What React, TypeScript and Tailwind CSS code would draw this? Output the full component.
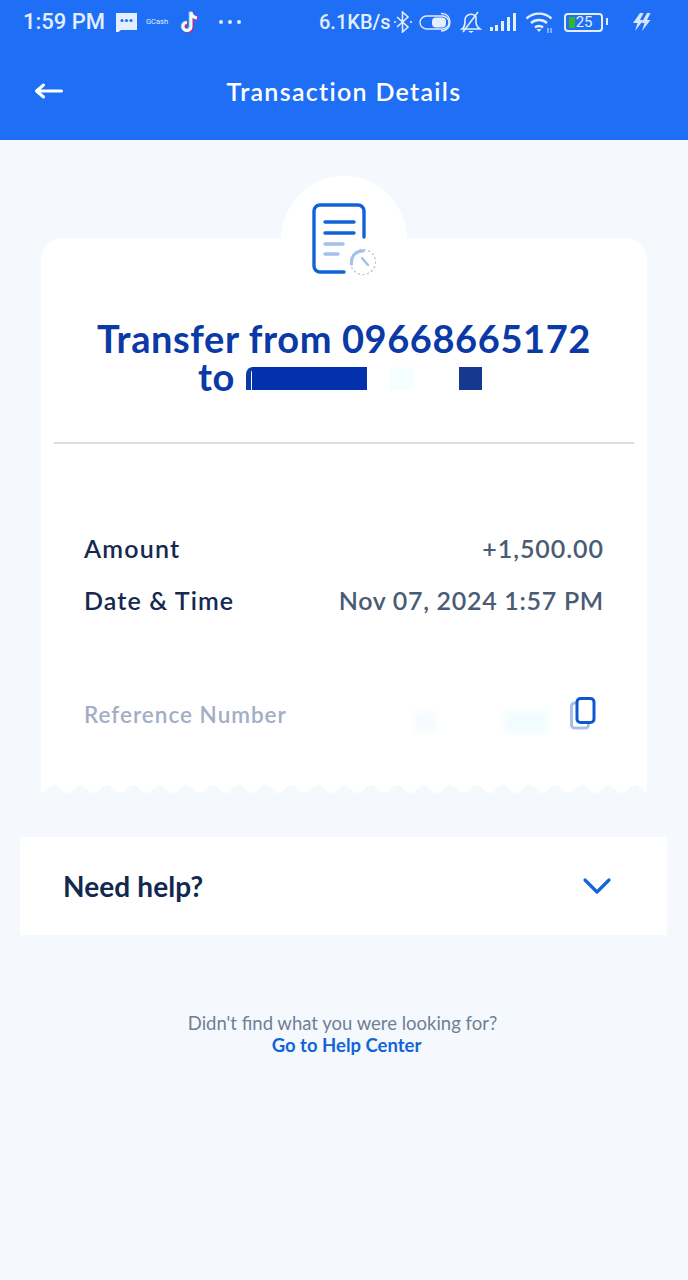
import React from "react";

const Wave = () => {
  let d = "M0 10 L0 9 ";
  for (let i = 0; i < 23; i++) {
    const x = i * 26.4;
    d += `C${x + 5} 9 ${x + 8} 1 ${x + 13.2} 1 C${x + 18} 1 ${x + 21} 9 ${x + 26.4} 9 `;
  }
  d += "L606 10 Z";
  return (
    <svg className="absolute left-0 bottom-0" width="606" height="10" viewBox="0 0 606 10">
      <path d={d} fill="#f5f9fe" />
    </svg>
  );
};

const StatusBar = () => (
  <div className="h-[44px] flex items-center pl-[23px] text-[#e3eefe] font-['Roboto',sans-serif]">
    <span className="text-[22px] font-medium leading-none w-[92px] whitespace-nowrap">1:59 PM</span>
    <svg width="22" height="20" viewBox="0 0 22 20">
      <path d="M1 1h21v17H6l-5 4z" fill="#e3eefe" />
      <circle cx="7" cy="8.5" r="1.6" fill="#1e6ff5" />
      <circle cx="11.5" cy="8.5" r="1.6" fill="#1e6ff5" />
      <circle cx="16" cy="8.5" r="1.6" fill="#1e6ff5" />
    </svg>
    <span className="text-[7.5px] ml-[9px] w-[23px] leading-none">GCash</span>
    <svg width="22" height="24" viewBox="0 0 22 24" className="ml-[10px]">
      <path d="M12 2v14.5a4 4 0 1 1-4-4M12 2c.5 3.5 2.5 5.5 6 6" fill="none" stroke="#ee1d52" strokeWidth="3.2" transform="translate(.8 .8)" />
      <path d="M12 2v14.5a4 4 0 1 1-4-4M12 2c.5 3.5 2.5 5.5 6 6" fill="none" stroke="#69c9d0" strokeWidth="3.2" transform="translate(-.8 -.4)" />
      <path d="M12 2v14.5a4 4 0 1 1-4-4M12 2c.5 3.5 2.5 5.5 6 6" fill="none" stroke="#f4f8ff" strokeWidth="3" />
    </svg>
    <svg width="24" height="6" viewBox="0 0 24 6" className="ml-[17px]">
      <circle cx="3" cy="3" r="2" fill="#e3eefe" />
      <circle cx="12" cy="3" r="2" fill="#e3eefe" />
      <circle cx="21" cy="3" r="2" fill="#e3eefe" />
    </svg>
    <span className="text-[20px] font-medium leading-none ml-[77px] whitespace-nowrap">6.1KB/s</span>
    <svg width="20" height="22" viewBox="0 0 20 22" className="ml-[2px]" fill="none" stroke="#e3eefe" strokeWidth="1.6">
      <path d="M4 6l11 10-5.5 5V1L15 6 4 16" />
      <circle cx="2" cy="11" r="1" fill="#e3eefe" stroke="none" />
      <circle cx="18" cy="11" r="1" fill="#e3eefe" stroke="none" />
    </svg>
    <svg width="34" height="22" viewBox="0 0 34 22" className="ml-[6px]" fill="none" stroke="#e3eefe" strokeWidth="1.4">
      <rect x="1" y="5" width="29" height="13" rx="6.5" />
      <rect x="13" y="6.5" width="14" height="10" rx="4" fill="#e3eefe" stroke="none" />
      <path d="M22 2.5c12-1 12 18 0 17.5" />
    </svg>
    <svg width="22" height="24" viewBox="0 0 22 24" className="ml-[7px]" fill="none" stroke="#e3eefe" strokeWidth="1.6">
      <path d="M2 19c3-2 3-5 3-9a6 6 0 0 1 11-3v5c0 3 1 5 4 7z" />
      <path d="M3 22L18 2" />
      <path d="M8 21h6l-3 2z" fill="#e3eefe" stroke="none" />
    </svg>
    <svg width="26" height="20" viewBox="0 0 26 20" className="ml-[8px]" fill="#e3eefe">
      <rect x="0" y="15" width="3" height="4" />
      <rect x="5" y="13" width="3" height="6" />
      <rect x="11" y="9" width="3" height="10" />
      <rect x="17" y="5" width="3" height="14" />
      <rect x="23" y="1" width="3" height="18" />
    </svg>
    <svg width="28" height="24" viewBox="0 0 28 24" className="ml-[9px]" fill="none" stroke="#e3eefe" strokeWidth="2.4">
      <path d="M1.5 8.5c7-6.5 18-6.5 25 0" />
      <path d="M6 13c4.500-4 11.500-4 16 0" />
      <path d="M10 17.500c2.200-2 5.800-2 8 0" />
      <path d="M11.500 19h5l-2.500 3z" fill="#e3eefe" stroke="none" />
      <path d="M23 18v5M26 18v5" strokeWidth="1" />
    </svg>
    <div className="ml-[11px] w-[39px] h-[19px] border-2 border-[#e3eefe] rounded-[4px] flex items-center pl-[3px] relative">
      <span className="w-[6px] h-[11px] bg-[#34b52a] shrink-0" />
      <span className="text-[15px] leading-none ml-[1px]">25</span>
      <span className="absolute -right-[7px] top-[3px] w-[2px] h-[7px] bg-[#e3eefe]" />
    </div>
    <svg width="20" height="20" viewBox="0 0 20 20" className="ml-[29px]" fill="#d6e5fd">
      <path d="M8 1h3.500L8 8h3.500L3 19l2.500-8H1z" />
      <path d="M15 1h3.500L15 8h3.500L10 19l2.500-8H9.500z" />
    </svg>
  </div>
);

const DocIcon = () => (
  <svg width="66" height="74" viewBox="0 0 66 74" fill="none" strokeLinecap="round">
    <path d="M53 35V9a6 6 0 0 0-6-6H9a6 6 0 0 0-6 6v55a6 6 0 0 0 6 6h24" stroke="#1164d8" strokeWidth="3.4" />
    <path d="M14 20h29M14 31h29" stroke="#1164d8" strokeWidth="3.4" />
    <path d="M14 42h18M14 52h13" stroke="#a5c0ec" strokeWidth="3.4" />
    <circle cx="52" cy="60" r="12.500" stroke="#b5bcc8" strokeWidth="1.200" strokeDasharray="1.200 3.400" />
    <path d="M40.500 62c-1-8 5-13.500 12-13" stroke="#a5c0ec" strokeWidth="3" />
    <path d="M51 56l6 7" stroke="#a5c0ec" strokeWidth="2.400" />
  </svg>
);

export default function App() {
  return (
    <div className="w-[688px] h-[1280px] bg-[#f5f9fe] font-['Lato',sans-serif] overflow-hidden">
      <div className="h-[140px] bg-[#1e6ff5]">
        <StatusBar />
        <div className="h-[96px] relative flex items-center justify-center pb-[2px]">
          <svg width="30" height="18" viewBox="0 0 30 18" className="absolute left-[34px] top-[38px]" fill="none" stroke="#ffffff" strokeWidth="3" strokeLinecap="round" strokeLinejoin="round">
            <path d="M27.500 9H3M9.500 3L2.500 9l7 6" />
          </svg>
          <span className="text-[25px] text-white font-semibold tracking-[1.3px] leading-none">Transaction Details</span>
        </div>
      </div>

      <div className="mt-[98px] ml-[41px] w-[606px] h-[556px] bg-white rounded-t-[22px] relative">
        <div className="absolute left-[240px] -top-[62px] w-[126px] h-[126px] rounded-full bg-white" />
        <div className="absolute left-[270px] -top-[36px]">
          <DocIcon />
        </div>
        <div className="relative pt-[81px] text-center text-[38px] leading-[38px] font-bold text-[#0b3aa6] tracking-[0.6px]">
          <div>Transfer from 09668665172</div>
          <div className="flex items-center h-[38px] pl-[157px]">
            <span>to</span>
            <span className="w-[7px] h-[23px] ml-[11px] mt-[4px] rounded-tl-[10px] border-l-[5px] border-t-[3px] border-[#0b3aa6]" />
            <span className="w-[115px] h-[23px] bg-[#0331ad] mt-[4px] -ml-[1px]" />
            <span className="w-[23px] h-[23px] bg-[#f6ffff] mt-[4px] ml-[23px]" />
            <span className="w-[23px] h-[23px] bg-[#17388f] mt-[4px] ml-[46px]" />
          </div>
        </div>
        <div className="mt-[47px] mx-[13px] h-[2px] bg-[#d5dfe6]" />
        <div className="mt-[89px] px-[43px] flex flex-col gap-[22px]">
          <div className="flex justify-between items-center h-[30px] text-[25px] font-semibold leading-none">
            <span className="text-[#15294f] tracking-[1.2px]">Amount</span>
            <span className="text-[#485c74] tracking-[0.95px]">+1,500.00</span>
          </div>
          <div className="flex justify-between items-center h-[30px] text-[25px] font-semibold leading-none">
            <span className="text-[#15294f] tracking-[1.1px]">Date &amp; Time</span>
            <span className="text-[#485c74] tracking-[0.7px]">Nov 07, 2024 1:57 PM</span>
          </div>
        </div>
        <div className="mt-[79px] pl-[43px] flex items-center h-[40px] relative">
          <span className="text-[22.5px] tracking-[1px] font-semibold text-[#a3aec4] leading-none w-[330px] whitespace-nowrap mt-[2px]">Reference Number</span>
          <span className="w-[22px] h-[20px] bg-[#f5fbfe] blur-[3px] mt-[16px]" />
          <span className="w-[44px] h-[22px] bg-[#f2fcfe] ml-[68px] blur-[3px] mt-[16px]" />
          <svg width="26" height="34" viewBox="0 0 26 34" className="ml-[22px]" fill="none">
            <rect x="1.500" y="6" width="17" height="25" rx="3" stroke="#a5c0ec" strokeWidth="3" />
            <rect x="7" y="1.500" width="17" height="24" rx="3.500" fill="#ffffff" stroke="#1058cf" strokeWidth="3" />
          </svg>
        </div>
        <Wave />
      </div>

      <div className="mt-[43px] ml-[20px] mr-[21px] h-[98px] bg-white flex items-center justify-between pl-[43px] pr-[55px]">
        <span className="text-[28px] font-bold text-[#11294f] leading-none tracking-[0.1px]">Need help?</span>
        <svg width="30" height="18" viewBox="0 0 30 18" fill="none" stroke="#1164d8" strokeWidth="3.200" strokeLinecap="round" strokeLinejoin="round">
          <path d="M3 3l12 12L27 3" />
        </svg>
      </div>

      <div className="mt-[77px] text-center">
        <div className="text-[18.5px] leading-[22px] text-[#6f7f95] pr-[3px]">Didn't find what you were looking for?</div>
        <div className="text-[18.5px] leading-[22px] font-bold text-[#1164d8] pl-[5px]">Go to Help Center</div>
      </div>
    </div>
  );
}
